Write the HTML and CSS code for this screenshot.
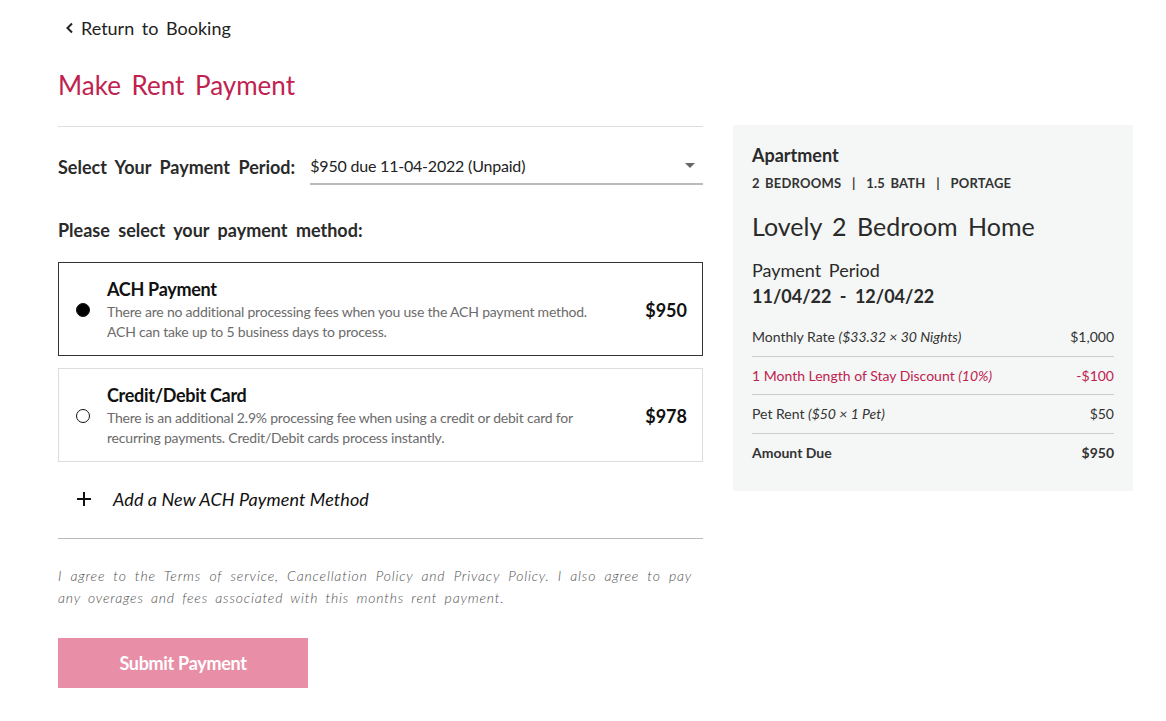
FILE: index.html
```html
<!DOCTYPE html>
<html lang="en">
<head>
    <meta charset="UTF-8">
    <title>Make Rent Payment</title>
    <link rel="stylesheet" href="styles.css">
</head>
<body>
    <div class="page">
        <!-- Back link -->
        <a class="back-link" href="#">
            <svg width="10" height="12" viewBox="0 0 10 12"><path d="M7 1.5 L2.5 6 L7 10.5" fill="none" stroke="#222" stroke-width="2"/></svg>
            Return to Booking
        </a>
        <h1 class="page-title">Make Rent Payment</h1>

        <div class="columns">
            <!-- Payment form -->
            <div class="form-col">
                <div class="period-row">
                    <label class="period-label">Select Your Payment Period:</label>
                    <div class="select-box">
                        <span>$950 due 11-04-2022 (Unpaid)</span>
                        <span class="caret"></span>
                    </div>
                </div>

                <h3 class="method-title">Please select your payment method:</h3>

                <div class="method-card selected">
                    <span class="radio"></span>
                    <div class="method-info">
                        <div class="method-name">ACH Payment</div>
                        <p class="method-desc">There are no additional processing fees when you use the ACH payment method.<br>ACH can take up to 5 business days to process.</p>
                    </div>
                    <div class="method-price">$950</div>
                </div>

                <div class="method-card">
                    <span class="radio"></span>
                    <div class="method-info">
                        <div class="method-name">Credit/Debit Card</div>
                        <p class="method-desc">There is an additional 2.9% processing fee when using a credit or debit card for<br>recurring payments. Credit/Debit cards process instantly.</p>
                    </div>
                    <div class="method-price">$978</div>
                </div>

                <div class="add-method">
                    <svg width="14" height="14" viewBox="0 0 14 14"><path d="M7 0 V14 M0 7 H14" stroke="#111" stroke-width="2"/></svg>
                    <span>Add a New ACH Payment Method</span>
                </div>

                <p class="terms">I agree to the Terms of service, Cancellation Policy and Privacy Policy. I also agree to pay any overages and fees associated with this months rent payment.</p>

                <button class="submit-btn">Submit Payment</button>
            </div>

            <!-- Summary panel -->
            <div class="summary">
                <div class="summary-type">Apartment</div>
                <div class="summary-meta">2 BEDROOMS &nbsp;|&nbsp; 1.5 BATH &nbsp;|&nbsp; PORTAGE</div>
                <h2 class="summary-name">Lovely 2 Bedroom Home</h2>
                <div class="summary-label">Payment Period</div>
                <div class="summary-dates">11/04/22 - 12/04/22</div>

                <div class="line-items">
                    <div class="line-item">
                        <span>Monthly Rate <em>($33.32 × 30 Nights)</em></span>
                        <span>$1,000</span>
                    </div>
                    <div class="line-item discount">
                        <span>1 Month Length of Stay Discount <em>(10%)</em></span>
                        <span>-$100</span>
                    </div>
                    <div class="line-item">
                        <span>Pet Rent <em>($50 × 1 Pet)</em></span>
                        <span>$50</span>
                    </div>
                    <div class="line-item total">
                        <span>Amount Due</span>
                        <span>$950</span>
                    </div>
                </div>
            </div>
        </div>
    </div>
</body>
</html>
```

FILE: styles.css
```css
/* Basic Styling */
body {
    margin: 0;
    font-family: Lato, "Open Sans", sans-serif;
    color: #222;
    background-color: #fff;
}
.page {
    padding: 16px 0 0 58px;
    width: 1075px;
}
/* Header */
.back-link {
    display: flex;
    align-items: center;
    gap: 6px;
    margin-left: 7px;
    font-size: 18px;
    color: #222;
    text-decoration: none;
    word-spacing: 3px;
    line-height: 24px;
}
.page-title {
    margin: 28px 0 0;
    font-size: 26px;
    font-weight: 400;
    color: #c0224f;
    word-spacing: 4px;
    line-height: 34px;
}
.columns {
    display: flex;
    gap: 30px;
    margin-top: 23px;
    align-items: flex-start;
}
/* Form Column */
.form-col {
    width: 645px;
    border-top: 1px solid #dedede;
    margin-top: 1px;
}
.period-row {
    display: flex;
    align-items: center;
    gap: 15px;
    margin-top: 21px;
}
.period-label {
    font-size: 18px;
    font-weight: 700;
    word-spacing: 4px;
    color: #2a2a2a;
}
.select-box {
    flex: 1;
    display: flex;
    justify-content: space-between;
    align-items: center;
    height: 35px;
    border-bottom: 2px solid #bbb;
    font-size: 16px;
    letter-spacing: -0.2px;
    color: #222;
    padding-right: 8px;
}
.caret {
    width: 0;
    height: 0;
    border-left: 5px solid transparent;
    border-right: 5px solid transparent;
    border-top: 5px solid #666;
}
.method-title {
    margin: 33px 0 20px;
    font-size: 18px;
    font-weight: 700;
    word-spacing: 4px;
    color: #2a2a2a;
    line-height: 24px;
}
.method-card {
    display: flex;
    align-items: center;
    padding: 14px 15px 13px 17px;
    border: 1px solid #ddd;
    margin-bottom: 12px;
}
.method-card.selected { border-color: #333; }
.radio {
    width: 12px;
    height: 12px;
    border: 1.5px solid #111;
    border-radius: 50%;
    margin-right: 17px;
    flex-shrink: 0;
}
.selected .radio { background-color: #000; }
.method-info { flex: 1; }
.method-name {
    font-size: 18px;
    font-weight: 700;
    color: #111;
    line-height: 24px;
    letter-spacing: -0.3px;
}
.method-desc {
    margin: 1px 0 0;
    font-size: 14px;
    color: #6b6b6b;
    line-height: 20px;
    letter-spacing: -0.2px;
}
.method-price {
    font-size: 18px;
    font-weight: 700;
    color: #111;
}
.add-method {
    display: flex;
    align-items: center;
    gap: 22px;
    padding: 14px 0 28px 19px;
    border-bottom: 1px solid #bbb;
    font-size: 18px;
    font-style: italic;
    color: #111;
    letter-spacing: 0.1px;
}
.terms {
    margin: 26px 11px 0 0;
    font-size: 14px;
    font-weight: 300;
    font-style: italic;
    color: #505050;
    line-height: 22px;
    letter-spacing: 0.8px;
    word-spacing: 3px;
    text-align: justify;
}
.submit-btn {
    margin-top: 29px;
    width: 250px;
    height: 50px;
    background-color: #e88fa7;
    color: #fff;
    border: none;
    font-family: inherit;
    font-size: 18px;
    font-weight: 700;
    letter-spacing: -0.3px;
    cursor: pointer;
}
/* Summary Panel */
.summary {
    width: 400px;
    box-sizing: border-box;
    background-color: #f5f7f6;
    padding: 19px 19px 20px;
}
.summary-type {
    font-size: 18px;
    font-weight: 700;
    color: #2a2a2a;
}
.summary-meta {
    margin-top: 9px;
    font-size: 13px;
    font-weight: 700;
    color: #333;
    word-spacing: 2px;
    letter-spacing: 0.2px;
}
.summary-name {
    margin: 20px 0 0;
    font-size: 25px;
    font-weight: 400;
    color: #2a2a2a;
    word-spacing: 4px;
}
.summary-label {
    margin-top: 18px;
    font-size: 18px;
    color: #2a2a2a;
    word-spacing: 3px;
}
.summary-dates {
    margin-top: 4px;
    font-size: 18px;
    font-weight: 700;
    color: #2a2a2a;
    word-spacing: 4px;
}
.line-items { margin-top: 11px; }
.line-item {
    display: flex;
    justify-content: space-between;
    align-items: center;
    height: 37.5px;
    border-bottom: 1px solid #ccc;
    font-size: 14px;
    color: #333;
}
.line-item em { font-style: italic; }
.line-item.discount { color: #c0224f; }
.line-item.total {
    border-bottom: none;
    font-weight: 700;
}
```
